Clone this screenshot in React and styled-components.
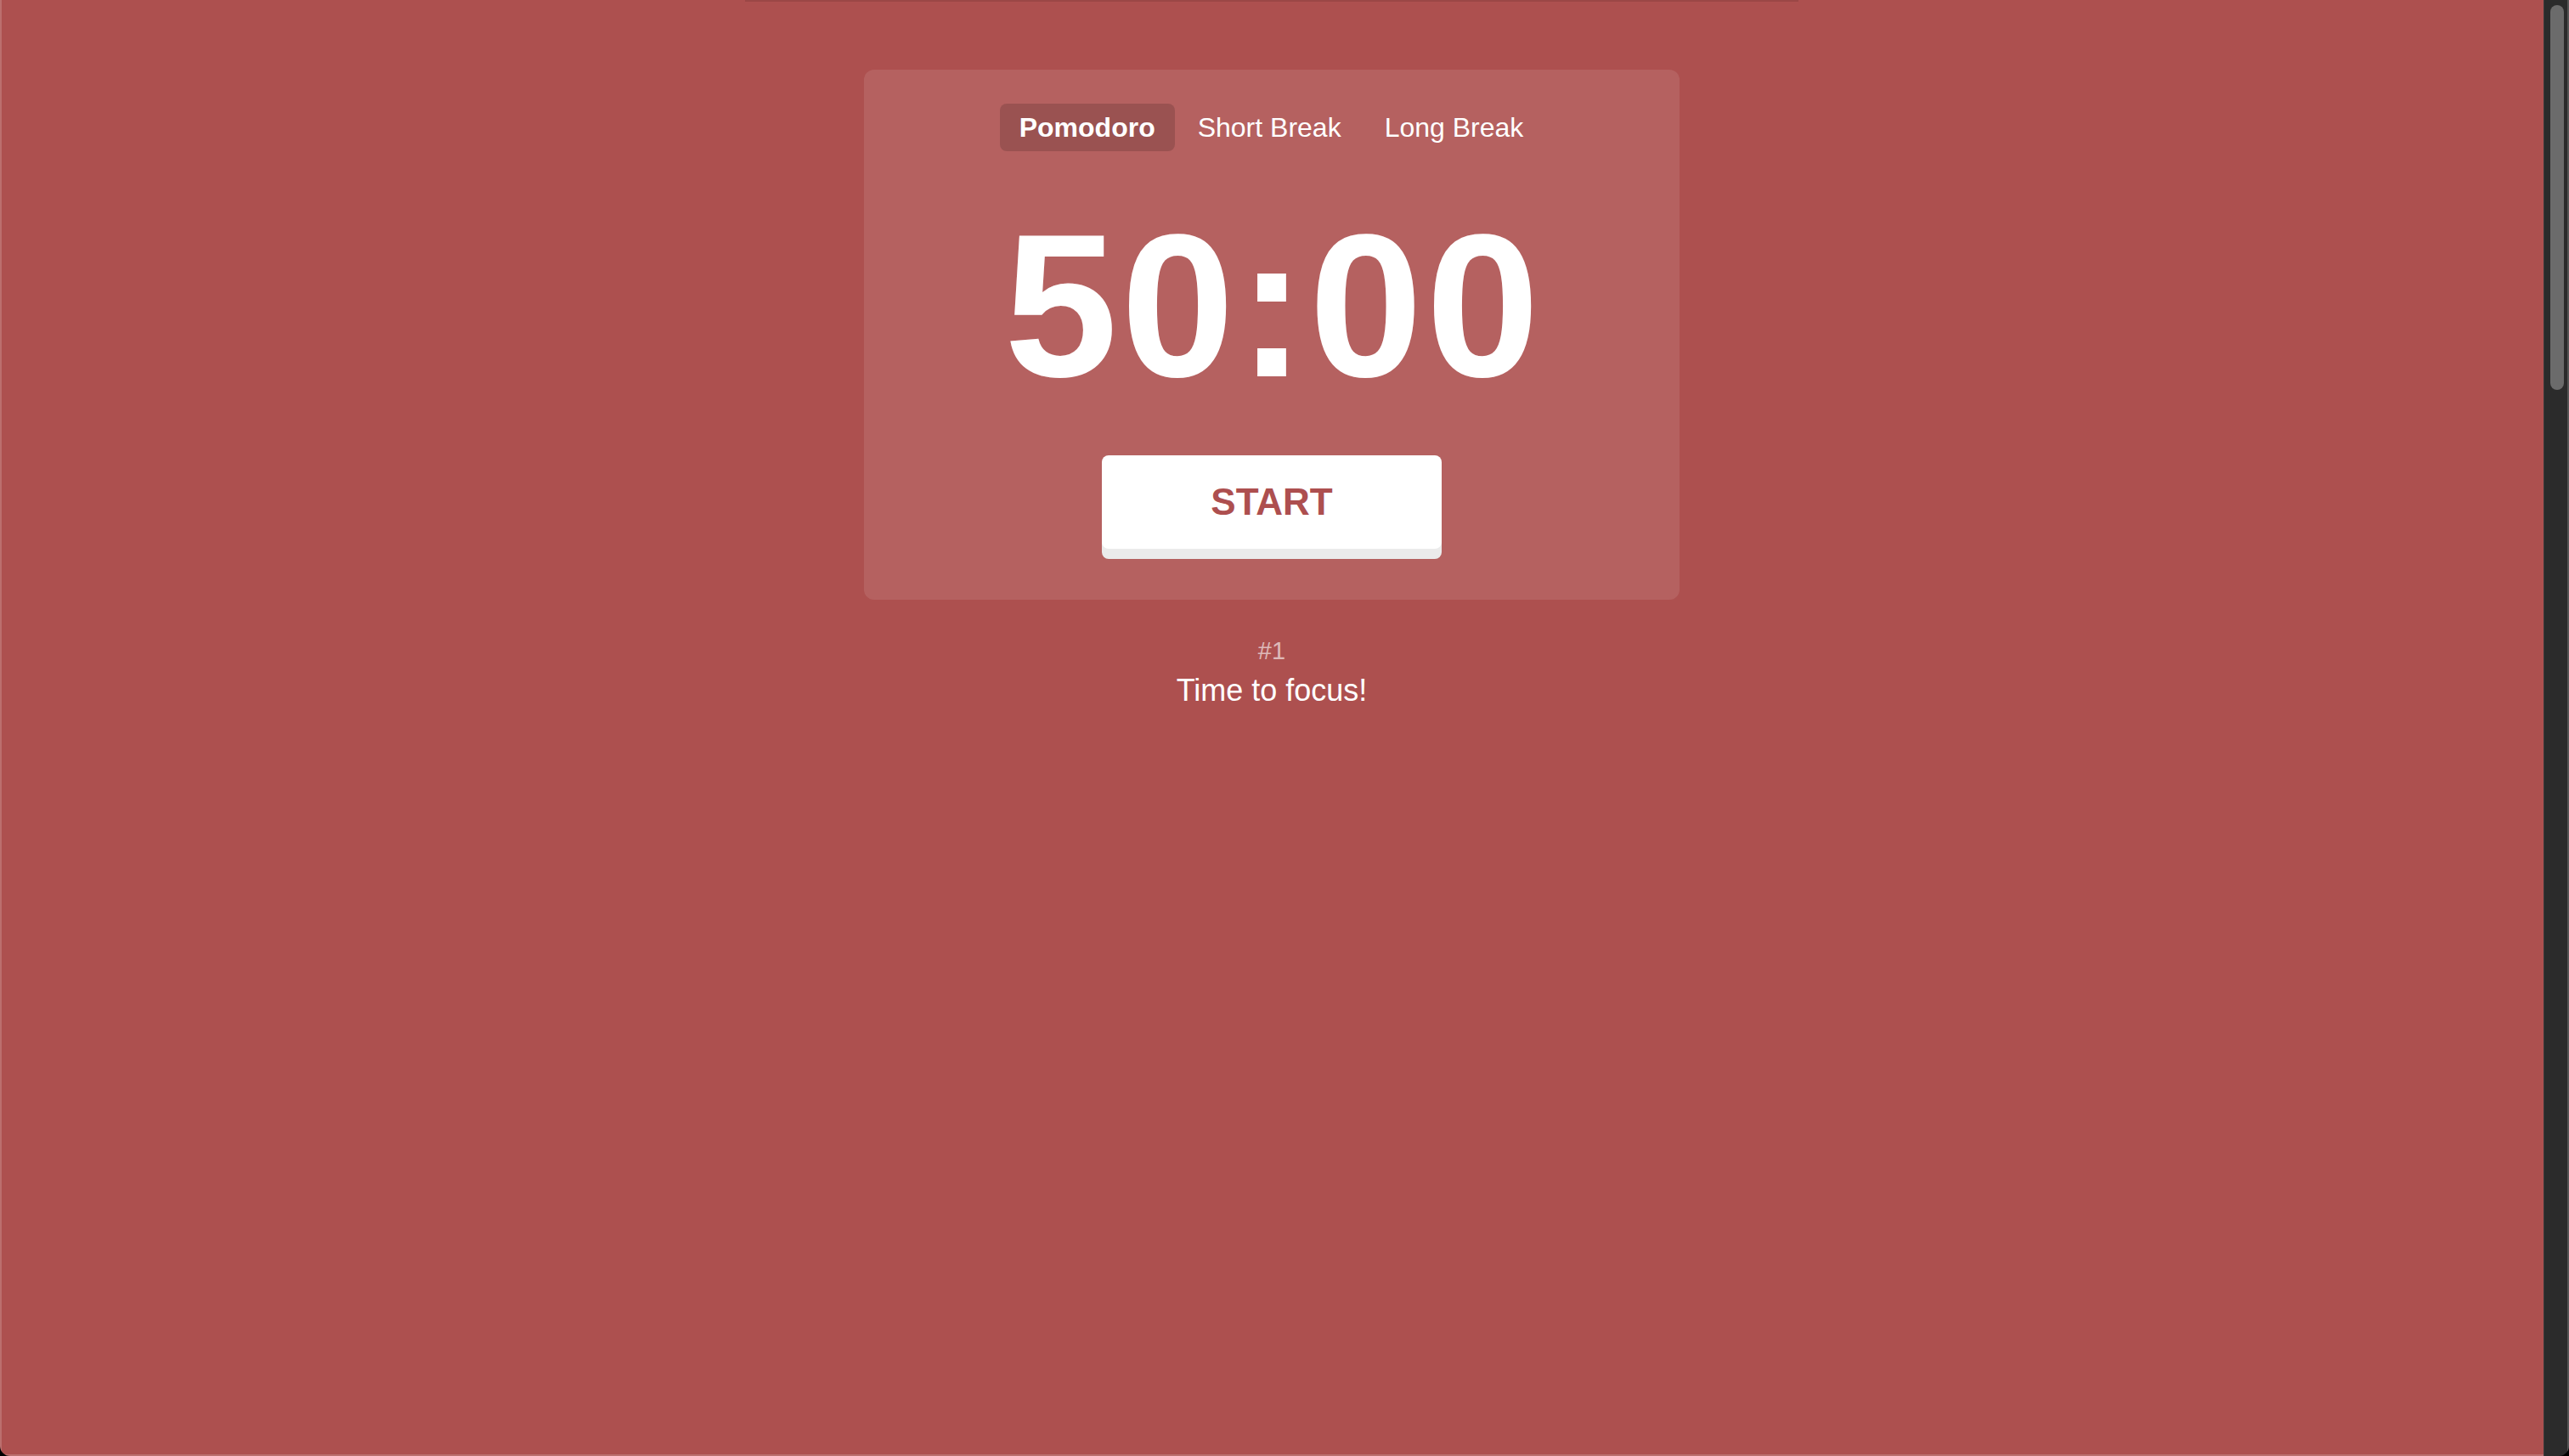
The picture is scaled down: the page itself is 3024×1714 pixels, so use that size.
import React from 'react'
import styled, { createGlobalStyle } from 'styled-components'

const GlobalStyle = createGlobalStyle`
  html, body {
    margin: 0;
    padding: 0;
    background: #000;
  }
  body {
    font-family: "Liberation Sans", Arial, sans-serif;
    -webkit-font-smoothing: antialiased;
  }
`

const Window = styled.div`
  display: flex;
  width: 3024px;
  height: 1714px;
  overflow: hidden;
  border-bottom-left-radius: 12px;
  border-bottom-right-radius: 12px;
`
const Page = styled.main`
  flex: 1;
  display: flex;
  flex-direction: column;
  align-items: center;
  background: #ad504f;
  color: #fff;
  box-shadow: inset 2px 0 0 rgba(255, 255, 255, 0.18), inset 0 -2px 0 rgba(255, 255, 255, 0.18);
`
const ProgressLine = styled.div`
  width: 1240px;
  height: 2px;
  background: rgba(0, 0, 0, 0.1);
`
const Card = styled.section`
  width: 960px;
  margin-top: 80px;
  padding: 40px 0 60px;
  box-sizing: border-box;
  display: flex;
  flex-direction: column;
  align-items: center;
  background: rgba(255, 255, 255, 0.1);
  border-radius: 12px;
`
const Tabs = styled.div`
  display: flex;
  align-items: center;
  justify-content: center;
  gap: 3px;
`
const Tab = styled.button`
  height: 56px;
  padding: 4px ${props => (props.active ? '23px' : '24px')};
  border: none;
  border-radius: 8px;
  font-family: inherit;
  font-size: 32px;
  color: #fff;
  cursor: pointer;
  font-weight: ${props => (props.active ? 'bold' : 'normal')};
  background: ${props => (props.active ? 'rgba(0, 0, 0, 0.15)' : 'none')};
`
const Timer = styled.div`
  margin-top: 44px;
  padding-left: 4px;
  font-size: 240px;
  line-height: 276px;
  letter-spacing: 4px;
  font-weight: bold;
`
const StartButton = styled.button`
  width: 400px;
  height: 110px;
  margin-top: 38px;
  border: none;
  border-radius: 8px;
  background: #fff;
  box-shadow: #ebebeb 0 12px 0;
  color: #ad4f4f;
  font-family: inherit;
  font-size: 44px;
  font-weight: bold;
  cursor: pointer;
`
const Status = styled.div`
  margin-top: 44px;
  display: flex;
  flex-direction: column;
  align-items: center;
`
const Count = styled.div`
  font-size: 29px;
  opacity: 0.6;
`
const Message = styled.div`
  margin-top: 9px;
  font-size: 36px;
`
const Scrollbar = styled.div`
  width: 30px;
  box-sizing: border-box;
  background: #2b2b2b;
  border-left: 1px solid #3a3a3a;
  border-right: 2px solid #555;
  padding: 6px 4px 0 7px;
`
const Thumb = styled.div`
  width: 16px;
  height: 453px;
  border-radius: 8px;
  background: #6b6b6b;
`

const tabs = ['Pomodoro', 'Short Break', 'Long Break']

export default function App() {
  return (
    <>
      <GlobalStyle />
      <Window>
        <Page>
          <ProgressLine />
          <Card>
            <Tabs>
              {tabs.map((t, i) => (
                <Tab key={t} active={i === 0}>
                  {t}
                </Tab>
              ))}
            </Tabs>
            <Timer>50:00</Timer>
            <StartButton>START</StartButton>
          </Card>
          <Status>
            <Count>#1</Count>
            <Message>Time to focus!</Message>
          </Status>
        </Page>
        <Scrollbar>
          <Thumb />
        </Scrollbar>
      </Window>
    </>
  )
}
